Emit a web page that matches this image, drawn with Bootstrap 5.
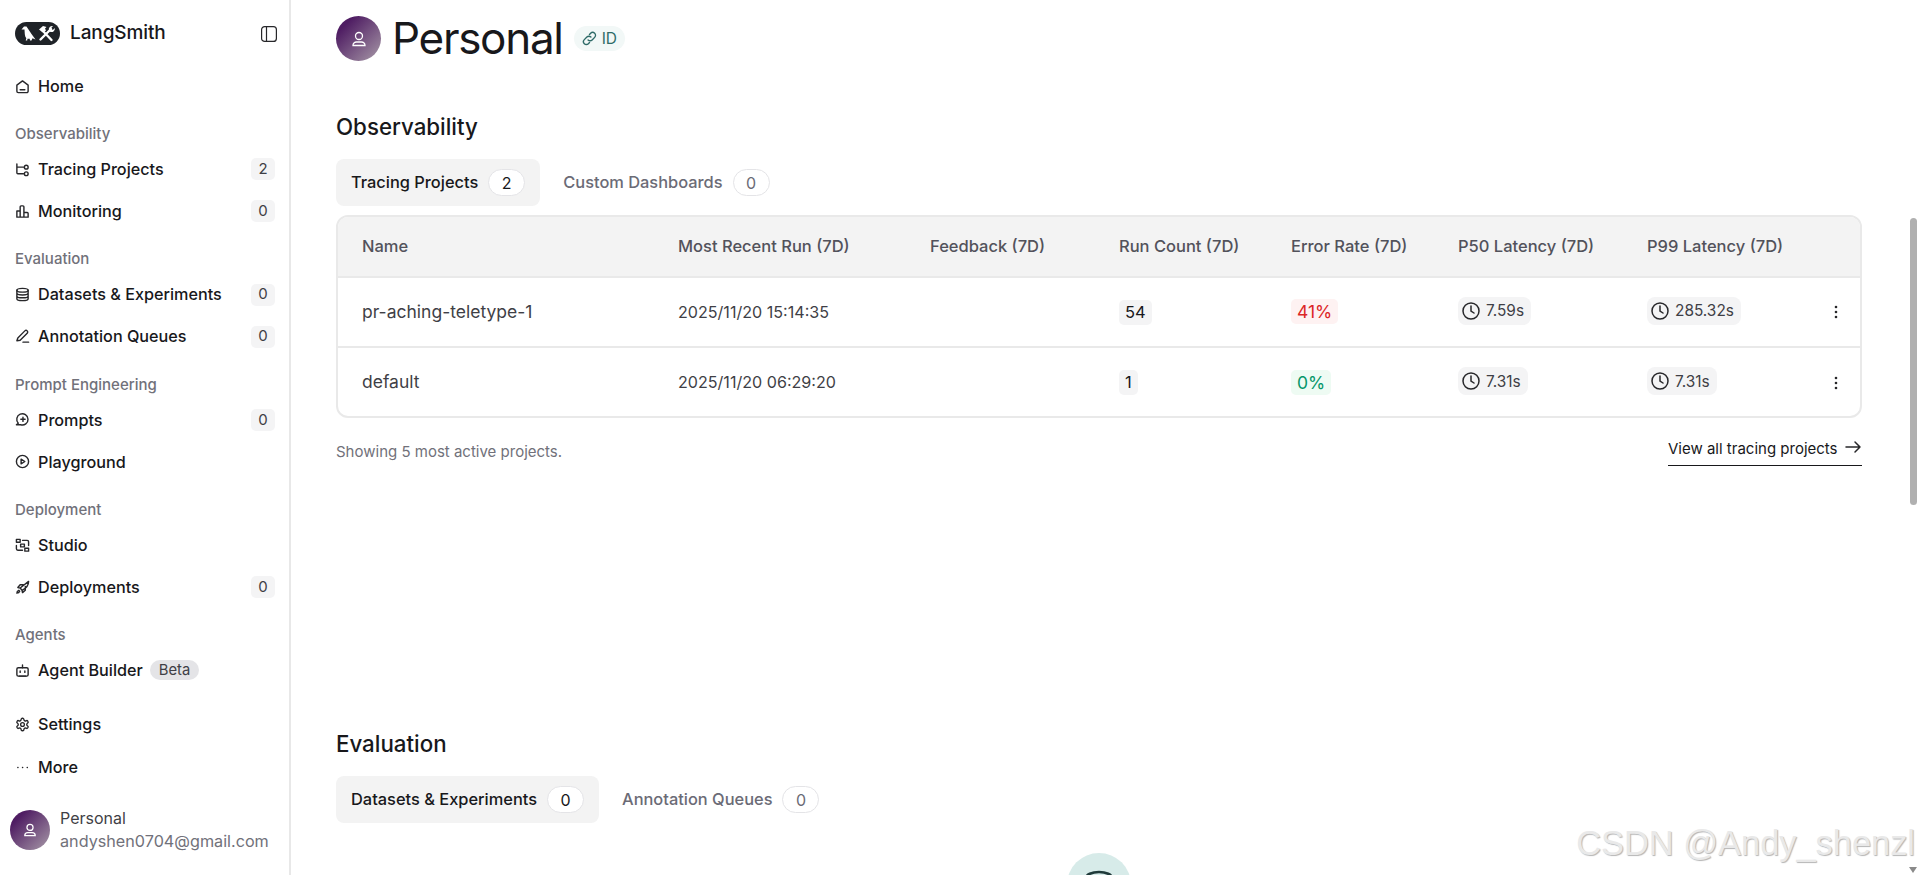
<!DOCTYPE html>
<html lang="en">
<head>
  <meta charset="UTF-8">
  <meta name="viewport" content="width=device-width, initial-scale=1.0">
  <title>LangSmith</title>
  <link rel="stylesheet" href="https://cdn.jsdelivr.net/npm/bootstrap@5.3.0/dist/css/bootstrap.min.css">
  <style>
    html, body { height: 100%; overflow: hidden; }
    body { font-family: Inter, "Noto Sans", sans-serif; color: #18181b; background: #fff; }
    .app-shell { height: 875px; position: relative; }
    .side-bar { width: 291px; flex: none; border-right: 2px solid #e8e8e8; padding: 0 15px; }
    .brand-row { height: 33px; margin-top: 17px; margin-bottom: 15px; }
    .brand-name { font-size: 19px; font-weight: 500; margin-left: 10px; letter-spacing: -.1px; }
    .collapse-btn { margin-left: auto; margin-right: -3px; }
    .side-item { height: 42px; font-size: 16.2px; font-weight: 500; color: #18181b; text-decoration: none; }
    .side-item svg { width: 15px; height: 15px; margin-right: 8px; flex: none; stroke: #27272a; fill: none; stroke-width: 1.5; stroke-linecap: round; stroke-linejoin: round; }
    .side-item svg.gear-icon { stroke-width: 2.2; }
    .side-count { margin-left: auto; margin-right: -1px; width: 24px; height: 22px; background: #f4f4f5; border-radius: 5px; font-size: 15px; font-weight: 400; color: #3f3f46; display: flex; align-items: center; justify-content: center; }
    .side-label { font-size: 15px; font-weight: 500; color: #71717a; height: 21px; line-height: 21px; margin-top: 16px; margin-bottom: 4.25px; }
    .beta-pill { background: #e4e4e7; color: #3f3f46; border-radius: 10px; font-size: 14.8px; font-weight: 400; padding: 0 9px; height: 20px; line-height: 20px; margin-left: 7px; }
    .settings-gap { margin-top: 12px; }
    .more-item { margin-top: 1px; }
    .profile-row { margin-top: 19px; margin-left: -5px; }
    .profile-avatar { width: 40px; height: 40px; border-radius: 50%; background: linear-gradient(135deg, #4f1d63 20%, #a89aa8 100%); display: flex; align-items: center; justify-content: center; flex: none; }
    .profile-name { font-size: 16px; line-height: 23px; color: #3f3f46; margin-left: 10px; }
    .profile-mail { font-size: 16.2px; line-height: 23px; color: #71717a; margin-left: 10px; }
    .main-pane { flex: 1; min-width: 0; padding: 16px 41px 0 45px; overflow: hidden; }
    .head-avatar { width: 45px; height: 45px; border-radius: 50%; background: linear-gradient(135deg, #4f1d63 20%, #a89aa8 100%); display: flex; align-items: center; justify-content: center; flex: none; }
    .page-title { font-size: 44px; font-weight: 400; line-height: 45px; margin: 0 0 0 11px; letter-spacing: -1.3px; color: #18181b; }
    .id-chip { margin-left: 11px; height: 25px; background: #f2f8f7; border-radius: 13px; padding: 0 8px; color: #2f6b68; font-size: 15.5px; display: flex; align-items: center; gap: 5px; }
    .sect-block { margin-top: 51px; }
    .sect-title { font-size: 22.3px; font-weight: 500; line-height: 30px; margin: 0; color: #18181b; }
    .tab-strip { gap: 8px; margin-top: 17px; }
    .tab-strip .nav-link { height: 47px; padding: 0 15px; border-radius: 8px; font-size: 16.4px; font-weight: 500; color: #6b6b76; display: flex; align-items: center; gap: 10px; }
    .tab-strip .nav-link.active { background: #f3f3f3; color: #18181b; }
    .tab-count { min-width: 37px; height: 27px; padding: 0 12px; border-radius: 14px; border: 1px solid #e4e4e7; background: #fff; display: flex; align-items: center; justify-content: center; font-weight: 400; font-size: 16px; }
    .tab-strip .active .tab-count { color: #18181b; }
    .proj-wrap { border: 2px solid #e9e9e9; border-radius: 12px; overflow: hidden; margin-top: 9px; height: 203px; }
    .proj-table { table-layout: fixed; width: 100%; margin: 0; }
    .proj-table th { background: #f3f3f3; color: #52525b; font-size: 16.5px; font-weight: 500; height: 60px; padding: 0 0 0 24px; vertical-align: middle; border-bottom: 2px solid #e9e9e9; }
    .proj-table td { font-size: 16.1px; font-weight: 400; color: #3f3f46; height: 70px; padding: 0 0 0 24px; vertical-align: middle; border-bottom: 2px solid #e9e9e9; }
    .proj-table td.proj-name { font-size: 17.5px; color: #3f3f46; }
    .proj-table tr:last-child td { border-bottom: 0; }
    .col-name { width: 316px; }
    .col-recent { width: 252px; }
    .col-feedback { width: 189px; }
    .col-count { width: 172px; }
    .col-error { width: 167px; }
    .col-lat { width: 189px; }
    .num-chip { display: inline-block; background: #f4f4f5; border-radius: 5px; padding: 0 6px; line-height: 25px; font-size: 16.5px; color: #18181b; }
    .rate-bad { background: #fef2f2; color: #dc2626; font-size: 17.5px; }
    .rate-good { background: #eefbf3; color: #059669; font-size: 17.5px; }
    .time-chip { display: inline-flex; align-items: center; gap: 5px; background: #f4f4f5; border-radius: 8px; padding: 0 7px 0 3px; height: 28px; font-size: 15.4px; color: #3f3f46; }
    .kebab-btn { display: block; width: 20px; margin-left: -10px; }
    .table-foot { margin-top: 15px; }
    .foot-note { font-size: 15px; color: #71717a; padding-top: 8px; }
    .view-link { font-size: 15px; font-weight: 400; color: #18181b; text-decoration: none; border-bottom: 1px solid #18181b; height: 33px; padding-top: 5px; width: 194px; display: flex; align-items: flex-start; justify-content: space-between; }
    .evals-block { margin-top: 263px; }
    .empty-mark { width: 64px; height: 64px; border-radius: 50%; background: #d7ebe9; margin: 30px auto 0; display: flex; justify-content: center; padding-top: 16px; }
    .fake-scroll { width: 17px; flex: none; background: #fff; position: relative; }
    .fake-thumb { position: absolute; left: 7px; width: 7px; top: 218px; height: 287px; background: #b0b0b0; border-radius: 4px; }
    .fake-down { position: absolute; left: 6px; bottom: 2px; width: 0; height: 0; border: 4px solid transparent; border-top: 6px solid #8a8a8a; border-bottom: 0; }
    .mark-text { position: absolute; right: 5px; top: 823px; font-family: "Liberation Sans", Arial, sans-serif; font-size: 34.4px; line-height: 40px; color: #e9e9e9; text-shadow: 1px 1px 1px #b5b5b5; white-space: nowrap; }
  </style>
</head>
<body>
  <div class="app-shell d-flex">
    <aside class="side-bar d-flex flex-column">
      <div class="brand-row d-flex align-items-center">
        <svg width="45" height="23" viewBox="0 0 45 23"><rect width="45" height="23" rx="11.5" fill="#1f2328"/>
          <path d="M6.500 7.500 9 4.500h2.500l2 3 3 4.500 4 5.500-3-1.200-1 2.200h-1.500l-.3-1.700H12.500l-.3 1.700h-1.500l.6-2.200C9.500 14 9.800 10.500 9.500 7.500z" fill="#fff"/>
          <path d="M27 8l9.500 10M36 7 25.500 17.500" stroke="#fff" stroke-width="2.400" stroke-linecap="round" fill="none"/>
          <path d="M24 7.500 28 4l3.500 1-1.500 1.500 1 2L28 10.500l-1.500-1zM34 8.500a3.500 3.500 0 0 1 4-4.500l-2 2.200 1.800 1.800 2-2a3.500 3.500 0 0 1-4.300 4z" fill="#fff"/>
        </svg>
        <span class="brand-name">LangSmith</span>
        <svg class="collapse-btn" width="16" height="16" viewBox="0 0 16 16" fill="none" stroke="#27272a" stroke-width="1.2"><rect x=".6" y=".6" width="14.800" height="14.800" rx="3"/><path d="M5.500 .6v14.800"/></svg>
      </div>

      <a class="side-item d-flex align-items-center" href="#"><svg viewBox="0 0 16 16"><path d="M2 6.500 8 2l6 4.500V13a1.500 1.500 0 0 1-1.500 1.500h-9A1.500 1.500 0 0 1 2 13zM5.500 11.500h5"/></svg>Home</a>

      <div class="side-label">Observability</div>
      <a class="side-item d-flex align-items-center" href="#"><svg viewBox="0 0 16 16"><path d="M2 2v9.500a1 1 0 0 0 1 1h6M2 5.500h7"/><circle cx="12" cy="5.500" r="2"/><circle cx="12" cy="12.500" r="2"/></svg>Tracing Projects<span class="side-count">2</span></a>
      <a class="side-item d-flex align-items-center" href="#"><svg viewBox="0 0 16 16"><path d="M2 14V7.500h3.500V14zM5.500 14V3a1 1 0 0 1 1-1h2a1 1 0 0 1 1 1v11zM9.500 14V9H13a1 1 0 0 1 1 1v4z"/></svg>Monitoring<span class="side-count">0</span></a>

      <div class="side-label">Evaluation</div>
      <a class="side-item d-flex align-items-center" href="#"><svg viewBox="0 0 16 16"><ellipse cx="8" cy="3.500" rx="6" ry="2"/><path d="M2 3.500v9c0 1.100 2.700 2 6 2s6-.9 6-2v-9M2 6.500c0 1.100 2.700 2 6 2s6-.9 6-2M2 9.500c0 1.100 2.700 2 6 2s6-.9 6-2"/></svg>Datasets &amp; Experiments<span class="side-count">0</span></a>
      <a class="side-item d-flex align-items-center" href="#"><svg viewBox="0 0 16 16"><path d="M2 12.500 3 9.500 10.500 2a1.700 1.700 0 0 1 2.500 2.500L5.500 12zM8.500 14h6"/></svg>Annotation Queues<span class="side-count">0</span></a>

      <div class="side-label">Prompt Engineering</div>
      <a class="side-item d-flex align-items-center" href="#"><svg viewBox="0 0 16 16"><path d="M3.500 12A6 6 0 1 1 6 13.600H1.500zM8.500 5.500v4.500M6.200 7.800h4.600"/></svg>Prompts<span class="side-count">0</span></a>
      <a class="side-item d-flex align-items-center" href="#"><svg viewBox="0 0 16 16"><circle cx="8" cy="8" r="6.500"/><path d="M6.500 5.500 10.500 8l-4 2.500z"/></svg>Playground</a>

      <div class="side-label">Deployment</div>
      <a class="side-item d-flex align-items-center" href="#"><svg viewBox="0 0 16 16"><rect x="1.500" y="1.500" width="4" height="3"/><rect x="10.500" y="11" width="4" height="3"/><rect x="6" y="6.500" width="4" height="3"/><path d="M8 2.500h5a1.500 1.500 0 0 1 1.500 1.500v4M8 13H3a1.500 1.500 0 0 1-1.500-1.500V8"/></svg>Studio</a>
      <a class="side-item d-flex align-items-center" href="#"><svg viewBox="0 0 16 16"><path d="M5.500 8.500 14.500 1.500c0 4-2 7-7 9.500zM5.500 8.500 3 8l2.500-3H9M7.500 11l.5 2.500 3-2.500V7M4 11c-1.500.5-2 2-2 3 1 0 2.500-.5 3-2z"/></svg>Deployments<span class="side-count">0</span></a>

      <div class="side-label">Agents</div>
      <a class="side-item d-flex align-items-center" href="#"><svg viewBox="0 0 16 16"><rect x="2" y="5" width="12" height="9" rx="1.500"/><path d="M8 5V2M5.500 8.500v1.500M10.500 8.500v1.500M4.500 14h7"/></svg>Agent Builder<span class="beta-pill">Beta</span></a>

      <a class="side-item settings-gap d-flex align-items-center" href="#"><svg class="gear-icon" viewBox="0 0 24 24"><path d="M12.220 2h-.44a2 2 0 0 0-2 2v.18a2 2 0 0 1-1 1.730l-.43.25a2 2 0 0 1-2 0l-.15-.08a2 2 0 0 0-2.730.73l-.22.38a2 2 0 0 0 .73 2.730l.15.1a2 2 0 0 1 1 1.720v.51a2 2 0 0 1-1 1.740l-.15.09a2 2 0 0 0-.73 2.730l.22.38a2 2 0 0 0 2.730.73l.15-.08a2 2 0 0 1 2 0l.43.25a2 2 0 0 1 1 1.730V20a2 2 0 0 0 2 2h.44a2 2 0 0 0 2-2v-.18a2 2 0 0 1 1-1.730l.43-.25a2 2 0 0 1 2 0l.15.08a2 2 0 0 0 2.730-.73l.22-.39a2 2 0 0 0-.73-2.730l-.15-.08a2 2 0 0 1-1-1.740v-.5a2 2 0 0 1 1-1.740l.15-.09a2 2 0 0 0 .73-2.730l-.22-.38a2 2 0 0 0-2.730-.73l-.15.08a2 2 0 0 1-2 0l-.43-.25a2 2 0 0 1-1-1.730V4a2 2 0 0 0-2-2z"/><circle cx="12" cy="12" r="3"/></svg>Settings</a>
      <a class="side-item more-item d-flex align-items-center" href="#"><svg viewBox="0 0 16 16"><path d="M3 8h.2M8 8h.2M13 8h.2"/></svg>More</a>

      <div class="profile-row d-flex align-items-center">
        <div class="profile-avatar">
          <svg width="14" height="14" viewBox="0 0 16 16" fill="none" stroke="#fff" stroke-width="1.400"><circle cx="8" cy="5" r="3.500"/><path d="M2 14.500a3.500 3.500 0 0 1 3.500-3.500h5a3.500 3.500 0 0 1 3.500 3.500z"/></svg>
        </div>
        <div>
          <div class="profile-name">Personal</div>
          <div class="profile-mail">andyshen0704@gmail.com</div>
        </div>
      </div>
    </aside>

    <main class="main-pane">
      <div class="d-flex align-items-center">
        <div class="head-avatar">
          <svg width="16" height="16" viewBox="0 0 16 16" fill="none" stroke="#fff" stroke-width="1.300"><circle cx="8" cy="5" r="3.500"/><path d="M2 14.500a3.500 3.500 0 0 1 3.500-3.500h5a3.500 3.500 0 0 1 3.500 3.500z"/></svg>
        </div>
        <h1 class="page-title">Personal</h1>
        <span class="id-chip">
          <svg width="15" height="15" viewBox="0 0 16 16" fill="none" stroke="#2f6b68" stroke-width="1.500" stroke-linecap="round"><path d="M6.500 9.500a3 3 0 0 0 4.300 0l2.700-2.700a3 3 0 0 0-4.300-4.300L8 3.700"/><path d="M9.500 6.500a3 3 0 0 0-4.300 0L2.500 9.200a3 3 0 0 0 4.300 4.300L8 12.300"/></svg>
          ID
        </span>
      </div>

      <section class="sect-block">
        <h2 class="sect-title">Observability</h2>
        <ul class="nav tab-strip">
          <li class="nav-item"><a class="nav-link active" href="#">Tracing Projects<span class="tab-count">2</span></a></li>
          <li class="nav-item"><a class="nav-link" href="#">Custom Dashboards<span class="tab-count">0</span></a></li>
        </ul>
        <div class="proj-wrap">
          <table class="table proj-table">
            <colgroup>
              <col class="col-name"><col class="col-recent"><col class="col-feedback"><col class="col-count"><col class="col-error"><col class="col-lat"><col class="col-lat"><col>
            </colgroup>
            <thead>
              <tr><th>Name</th><th>Most Recent Run (7D)</th><th>Feedback (7D)</th><th>Run Count (7D)</th><th>Error Rate (7D)</th><th>P50 Latency (7D)</th><th>P99 Latency (7D)</th><th></th></tr>
            </thead>
            <tbody>
              <tr>
                <td class="proj-name">pr-aching-teletype-1</td>
                <td>2025/11/20 15:14:35</td>
                <td></td>
                <td><span class="num-chip">54</span></td>
                <td><span class="num-chip rate-bad">41%</span></td>
                <td><span class="time-chip"><svg width="20" height="20" viewBox="0 0 20 20" fill="none" stroke="#27272a" stroke-width="1.500" stroke-linecap="round"><circle cx="10" cy="10" r="8"/><path d="M10 5v5l3 2"/></svg>7.59s</span></td>
                <td><span class="time-chip"><svg width="20" height="20" viewBox="0 0 20 20" fill="none" stroke="#27272a" stroke-width="1.500" stroke-linecap="round"><circle cx="10" cy="10" r="8"/><path d="M10 5v5l3 2"/></svg>285.32s</span></td>
                <td><svg class="kebab-btn" height="16" viewBox="0 0 20 16" fill="#27272a"><circle cx="10" cy="3" r="1.300"/><circle cx="10" cy="8" r="1.300"/><circle cx="10" cy="13" r="1.300"/></svg></td>
              </tr>
              <tr>
                <td class="proj-name">default</td>
                <td>2025/11/20 06:29:20</td>
                <td></td>
                <td><span class="num-chip">1</span></td>
                <td><span class="num-chip rate-good">0%</span></td>
                <td><span class="time-chip"><svg width="20" height="20" viewBox="0 0 20 20" fill="none" stroke="#27272a" stroke-width="1.500" stroke-linecap="round"><circle cx="10" cy="10" r="8"/><path d="M10 5v5l3 2"/></svg>7.31s</span></td>
                <td><span class="time-chip"><svg width="20" height="20" viewBox="0 0 20 20" fill="none" stroke="#27272a" stroke-width="1.500" stroke-linecap="round"><circle cx="10" cy="10" r="8"/><path d="M10 5v5l3 2"/></svg>7.31s</span></td>
                <td><svg class="kebab-btn" height="16" viewBox="0 0 20 16" fill="#27272a"><circle cx="10" cy="3" r="1.300"/><circle cx="10" cy="8" r="1.300"/><circle cx="10" cy="13" r="1.300"/></svg></td>
              </tr>
            </tbody>
          </table>
        </div>
        <div class="table-foot d-flex justify-content-between align-items-start">
          <span class="foot-note">Showing 5 most active projects.</span>
          <a class="view-link" href="#">View all tracing projects
            <svg width="18" height="18" viewBox="0 0 18 18" fill="none" stroke="#27272a" stroke-width="1.500" stroke-linecap="round" stroke-linejoin="round"><path d="M2 9h14M11 4l5 5-5 5"/></svg>
          </a>
        </div>
      </section>

      <section class="evals-block">
        <h2 class="sect-title">Evaluation</h2>
        <ul class="nav tab-strip">
          <li class="nav-item"><a class="nav-link active" href="#">Datasets &amp; Experiments<span class="tab-count">0</span></a></li>
          <li class="nav-item"><a class="nav-link" href="#">Annotation Queues<span class="tab-count">0</span></a></li>
        </ul>
        <div class="empty-mark">
          <svg width="34" height="34" viewBox="0 0 34 34" fill="none" stroke="#1f3a3a" stroke-width="2.500"><ellipse cx="17" cy="9" rx="13" ry="6"/><path d="M4 9v16M30 9v16"/></svg>
        </div>
      </section>
    </main>

    <div class="fake-scroll"><div class="fake-thumb"></div><div class="fake-down"></div></div>
    <div class="mark-text">CSDN @Andy_shenzl</div>
  </div>

  <script src="https://cdn.jsdelivr.net/npm/bootstrap@5.3.0/dist/js/bootstrap.bundle.min.js"></script>
</body>
</html>
